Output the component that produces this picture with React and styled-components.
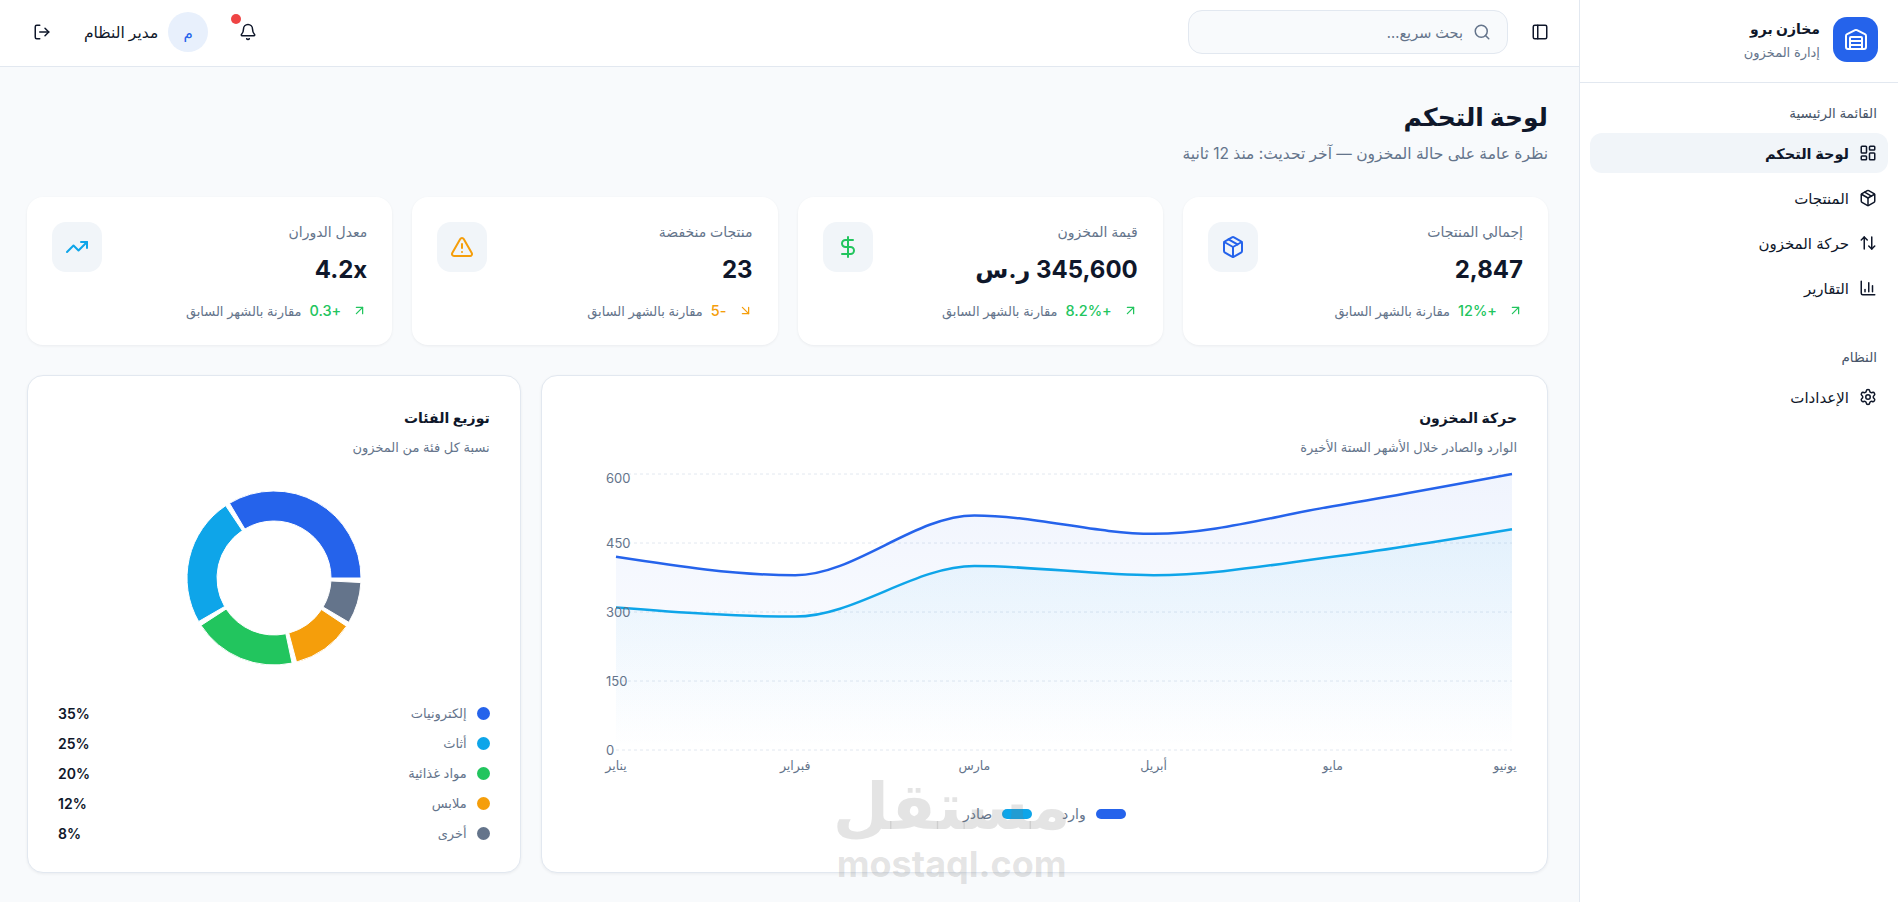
import React from 'react';
import styled, { createGlobalStyle } from 'styled-components';
import {
  Warehouse,
  LayoutDashboard,
  Package,
  ArrowUpDown,
  ChartColumn,
  Settings,
  PanelLeft,
  Search,
  Bell,
  LogOut,
  DollarSign,
  TriangleAlert,
  TrendingUp,
  ArrowUpRight,
  ArrowDownRight,
} from 'lucide-react';

const GlobalStyle = createGlobalStyle`
  * { box-sizing: border-box; }
  html, body { margin: 0; height: 100%; }
  body {
    background: #f8fafc;
    color: #0f172a;
    font-family: Inter, "Noto Sans", "DejaVu Sans", sans-serif;
    overflow: hidden;
  }
`;

const Shell = styled.div`
  display: flex;
  width: 1902px;
  height: 902px;
`;

const Sidebar = styled.aside`
  width: 323px;
  flex-shrink: 0;
  background: #fff;
  border-left: 1px solid #e2e8f0;
`;

const Brand = styled.div`
  height: 83px;
  margin-right: 4px;
  padding: 17px 20px 0 0;
  display: flex;
  gap: 13px;
  border-bottom: 1px solid #e2e8f0;
`;

const BrandLogo = styled.div`
  width: 45px;
  height: 45px;
  border-radius: 14px;
  background: #2563eb;
  color: #fff;
  display: flex;
  align-items: center;
  justify-content: center;
`;

const BrandName = styled.div`
  font-size: 14px;
  font-weight: 700;
  line-height: 24px;
`;

const BrandSub = styled.div`
  font-size: 13px;
  line-height: 22px;
  color: #64748b;
`;

const Nav = styled.nav`
  padding: 20px 14px 0 10px;
`;

const NavLabel = styled.div`
  font-size: 13.5px;
  line-height: 20px;
  color: #475569;
  font-weight: 500;
  padding: 0 11px;
  margin-bottom: 10px;
  margin-top: ${(p) => (p.$spaced ? '39px' : '0')};
`;

const NavItem = styled.div`
  height: 40px;
  margin-bottom: 5px;
  padding: 0 11px;
  border-radius: 12px;
  display: flex;
  align-items: center;
  gap: 10px;
  font-size: ${(p) => (p.$active ? '14.5px' : '15px')};
  font-weight: ${(p) => (p.$active ? 600 : 400)};
  background: ${(p) => (p.$active ? '#f1f5f9' : 'transparent')};
`;

const Main = styled.div`
  flex: 1;
  min-width: 0;
  display: flex;
  flex-direction: column;
`;

const Topbar = styled.header`
  height: 67px;
  flex-shrink: 0;
  background: #fff;
  border-bottom: 1px solid #e2e8f0;
  display: flex;
  align-items: center;
  padding: 0 27px 2px 30px;
`;

const IconButton = styled.div`
  position: relative;
  width: 24px;
  height: 24px;
  display: flex;
  align-items: center;
  justify-content: center;
`;

const SearchBox = styled.div`
  width: 320px;
  height: 44px;
  margin-right: 20px;
  padding: 0 16px;
  display: flex;
  align-items: center;
  gap: 10px;
  border: 1px solid #e2e8f0;
  border-radius: 14px;
  background: #f8fafc;
  font-size: 14.5px;
  color: #64748b;
`;

const TopbarEnd = styled.div`
  margin-right: auto;
  display: flex;
  align-items: center;
`;

const NotifyDot = styled.span`
  position: absolute;
  top: -6px;
  right: 19px;
  width: 10px;
  height: 10px;
  border-radius: 50%;
  background: #ef4444;
`;

const Avatar = styled.div`
  width: 40px;
  height: 40px;
  margin: 0 28px 0 10px;
  border-radius: 50%;
  background: #e8f0fc;
  color: #2563eb;
  font-size: 15px;
  display: flex;
  align-items: center;
  justify-content: center;
`;

const UserName = styled.div`
  font-size: 15.5px;
  font-weight: 500;
  margin-left: 30px;
`;

const Content = styled.main`
  flex: 1;
  padding: 31px 31px 0 27px;
`;

const PageTitle = styled.h1`
  margin: 0;
  font-size: 25px;
  line-height: 38px;
  font-weight: 700;
`;

const PageSub = styled.p`
  margin: 6px 0 0;
  font-size: 15.5px;
  line-height: 24px;
  color: #64748b;
`;

const StatGrid = styled.div`
  display: grid;
  grid-template-columns: repeat(4, 1fr);
  gap: 20px;
  margin-top: 31px;
`;

const StatCard = styled.div`
  height: 148px;
  padding: 25px;
  border-radius: 16px;
  background: #fff;
  box-shadow: 0 1px 3px rgba(15, 23, 42, 0.06);
`;

const StatTop = styled.div`
  display: flex;
  justify-content: space-between;
`;

const StatLabel = styled.div`
  font-size: 14px;
  line-height: 20px;
  font-weight: 500;
  color: #64748b;
`;

const StatValue = styled.div`
  margin-top: 12px;
  font-size: 24px;
  line-height: 32px;
  font-weight: 700;
`;

const StatIcon = styled.div`
  width: 50px;
  height: 50px;
  border-radius: 14px;
  background: #f1f5f9;
  color: ${(p) => p.$color};
  display: flex;
  align-items: center;
  justify-content: center;
`;

const StatFoot = styled.div`
  margin-top: 16px;
  display: flex;
  align-items: center;
  gap: 8px;
  font-size: 13px;
  color: #64748b;
`;

const Delta = styled.span`
  color: ${(p) => p.$color};
  font-size: 14.5px;
  font-weight: 500;
  margin-right: 3px;
`;

const ChartGrid = styled.div`
  display: grid;
  grid-template-columns: repeat(3, 1fr);
  gap: 20px;
  margin-top: 30px;
`;

const Panel = styled.section`
  position: relative;
  grid-column: span ${(p) => p.$span || 1};
  height: 498px;
  padding: 30px;
  border: 1px solid #e2e8f0;
  border-radius: 16px;
  background: #fff;
  box-shadow: 0 1px 3px rgba(15, 23, 42, 0.06);
`;

const PanelTitle = styled.h2`
  margin: 0;
  font-size: 14px;
  line-height: 24px;
  font-weight: 600;
`;

const PanelSub = styled.p`
  margin: 7px 0 0;
  font-size: 13px;
  line-height: 20px;
  color: #64748b;
`;

const ChartSvg = styled.svg`
  display: block;
  direction: ltr;
  font-family: inherit;
  margin-top: 3px;
`;

const ChartLegend = styled.div`
  display: flex;
  justify-content: center;
  gap: 30px;
  margin-top: 15px;
  font-size: 14px;
  color: #64748b;
`;

const LegendItem = styled.div`
  display: flex;
  align-items: center;
  gap: 10px;
`;

const LegendKey = styled.span`
  width: 30px;
  height: 10px;
  border-radius: 5px;
  background: ${(p) => p.$color};
`;

const DonutWrap = styled.div`
  display: flex;
  justify-content: center;
  margin-top: 31px;
`;

const CategoryList = styled.div`
  margin-top: 30px;
`;

const CategoryRow = styled.div`
  height: 30px;
  display: flex;
  align-items: center;
  gap: 10px;
  font-size: 13px;
  color: #64748b;
`;

const CategoryDot = styled.span`
  width: 13px;
  height: 13px;
  border-radius: 50%;
  background: ${(p) => p.$color};
`;

const CategoryValue = styled.span`
  margin-right: auto;
  width: 32px;
  direction: ltr;
  text-align: left;
  font-weight: 600;
  font-size: 14px;
  color: #0f172a;
`;

const Watermark = styled.div`
  position: absolute;
  left: 290px;
  top: 394px;
  width: 240px;
  text-align: center;
  color: rgba(120, 120, 120, 0.2);
  font-weight: 700;
  line-height: 1;
  pointer-events: none;
`;

const WatermarkAr = styled.div`
  font-size: 65px;
  line-height: 72px;
`;

const WatermarkEn = styled.div`
  font-size: 36px;
  margin-top: 4px;
  direction: ltr;
`;

const stats = [
  { label: 'إجمالي المنتجات', value: '2,847', delta: '+12%', icon: Package, color: '#2563eb', up: true },
  { label: 'قيمة المخزون', value: '345,600 ر.س', delta: '+8.2%', icon: DollarSign, color: '#22c55e', up: true },
  { label: 'منتجات منخفضة', value: '23', delta: '-5', icon: TriangleAlert, color: '#f59e0b', up: false },
  { label: 'معدل الدوران', value: '4.2x', delta: '+0.3', icon: TrendingUp, color: '#0ea5e9', up: true },
];

const categories = [
  { name: 'إلكترونيات', pct: 35, color: '#2563eb' },
  { name: 'أثاث', pct: 25, color: '#0ea5e9' },
  { name: 'مواد غذائية', pct: 20, color: '#22c55e' },
  { name: 'ملابس', pct: 12, color: '#f59e0b' },
  { name: 'أخرى', pct: 8, color: '#64748b' },
];

const months = ['يناير', 'فبراير', 'مارس', 'أبريل', 'مايو', 'يونيو'];
const inbound = [420, 380, 510, 470, 530, 600];
const outbound = [310, 290, 400, 380, 420, 480];

const W = 943;
const H = 330;
const X0 = 42;
const STEP = 179.2;
const BASE = 290;
const SCALE = 0.46;

// same maths as d3 curveMonotoneX, so the curves bend like the chart lib's
function monotonePath(values) {
  const pts = values.map((v, i) => [X0 + i * STEP, BASE - v * SCALE]);
  const slopes = pts.slice(1).map((p, i) => (p[1] - pts[i][1]) / STEP);
  const sign = (v) => (v < 0 ? -1 : 1);
  const t = pts.map((_, i) => {
    if (i === 0 || i === pts.length - 1) return null;
    const a = slopes[i - 1];
    const b = slopes[i];
    return (sign(a) + sign(b)) * Math.min(Math.abs(a), Math.abs(b), 0.25 * Math.abs(a + b)) || 0;
  });
  t[0] = (3 * slopes[0] - t[1]) / 2;
  t[t.length - 1] = (3 * slopes[slopes.length - 1] - t[t.length - 2]) / 2;
  let d = `M${pts[0][0]},${pts[0][1]}`;
  for (let i = 1; i < pts.length; i++) {
    const h = STEP / 3;
    d += `C${pts[i - 1][0] + h},${pts[i - 1][1] + h * t[i - 1]},${pts[i][0] - h},${pts[i][1] - h * t[i]},${pts[i][0]},${pts[i][1]}`;
  }
  return d;
}

function MovementChart() {
  const close = `L${X0 + 5 * STEP},${BASE}L${X0},${BASE}Z`;
  const blue = monotonePath(inbound);
  const cyan = monotonePath(outbound);
  return (
    <ChartSvg width={W} height={H} viewBox={`0 0 ${W} ${H}`}>
      <defs>
        <linearGradient id="fillBlue" x1="0" y1="0" x2="0" y2="1">
          <stop offset="0%" stopColor="#2563eb" stopOpacity="0.07" />
          <stop offset="100%" stopColor="#2563eb" stopOpacity="0" />
        </linearGradient>
        <linearGradient id="fillCyan" x1="0" y1="0" x2="0" y2="1">
          <stop offset="0%" stopColor="#0ea5e9" stopOpacity="0.07" />
          <stop offset="100%" stopColor="#0ea5e9" stopOpacity="0" />
        </linearGradient>
      </defs>
      {[0, 150, 300, 450, 600].map((v) => (
        <line key={v} x1={X0} x2={X0 + 5 * STEP} y1={BASE - v * SCALE} y2={BASE - v * SCALE} stroke="#e2e8f0" strokeDasharray="3 3" />
      ))}
      <path d={blue + close} fill="url(#fillBlue)" />
      <path d={cyan + close} fill="url(#fillCyan)" />
      <path d={blue} fill="none" stroke="#2563eb" strokeWidth="2.5" />
      <path d={cyan} fill="none" stroke="#0ea5e9" strokeWidth="2.5" />
      {[0, 150, 300, 450, 600].map((v) => (
        <text key={v} x={32} y={BASE - v * SCALE + (v === 600 ? 9 : 5)} fontSize="13" fill="#64748b">{v}</text>
      ))}
      {months.map((m, i) => (
        <text key={m} x={i === 5 ? X0 + 5 * STEP - 7 : X0 + i * STEP} y={BASE + 20} fontSize="12.5" fill="#64748b" textAnchor="middle">{m}</text>
      ))}
    </ChartSvg>
  );
}

function arcPath(cx, cy, r0, r1, from, to) {
  const rad = (a) => (a * Math.PI) / 180;
  const pt = (r, a) => `${cx + r * Math.cos(rad(a))},${cy - r * Math.sin(rad(a))}`;
  const large = to - from > 180 ? 1 : 0;
  return `M${pt(r1, from)}A${r1},${r1} 0 ${large} 0 ${pt(r1, to)}L${pt(r0, to)}A${r0},${r0} 0 ${large} 1 ${pt(r0, from)}Z`;
}

function Donut() {
  let angle = 0;
  return (
    <svg width="180" height="180" viewBox="0 0 180 180">
      {categories.map((c) => {
        const sweep = (345 * c.pct) / 100;
        const d = arcPath(90, 90, 57, 87, angle, angle + sweep);
        angle += sweep + 3;
        return <path key={c.name} d={d} fill={c.color} stroke="#fff" strokeWidth="1" />;
      })}
    </svg>
  );
}

export default function App() {
  return (
    <>
      <GlobalStyle />
      <Shell dir="rtl">
        <Sidebar>
          <Brand>
            <BrandLogo><Warehouse size={24} strokeWidth={2} /></BrandLogo>
            <div>
              <BrandName>مخازن برو</BrandName>
              <BrandSub>إدارة المخزون</BrandSub>
            </div>
          </Brand>
          <Nav>
            <NavLabel>القائمة الرئيسية</NavLabel>
            <NavItem $active><LayoutDashboard size={18} />لوحة التحكم</NavItem>
            <NavItem><Package size={18} />المنتجات</NavItem>
            <NavItem><ArrowUpDown size={18} />حركة المخزون</NavItem>
            <NavItem><ChartColumn size={18} />التقارير</NavItem>
            <NavLabel $spaced>النظام</NavLabel>
            <NavItem><Settings size={18} />الإعدادات</NavItem>
          </Nav>
        </Sidebar>
        <Main>
          <Topbar>
            <IconButton><PanelLeft size={18} /></IconButton>
            <SearchBox><Search size={18} />بحث سريع...</SearchBox>
            <TopbarEnd>
              <IconButton><Bell size={18} /><NotifyDot /></IconButton>
              <Avatar>م</Avatar>
              <UserName>مدير النظام</UserName>
              <IconButton><LogOut size={18} /></IconButton>
            </TopbarEnd>
          </Topbar>
          <Content>
            <PageTitle>لوحة التحكم</PageTitle>
            <PageSub>نظرة عامة على حالة المخزون — آخر تحديث: منذ 12 ثانية</PageSub>
            <StatGrid>
              {stats.map((s) => {
                const Icon = s.icon;
                const Arrow = s.up ? ArrowUpRight : ArrowDownRight;
                const tone = s.up ? '#22c55e' : '#f59e0b';
                return (
                  <StatCard key={s.label}>
                    <StatTop>
                      <div>
                        <StatLabel>{s.label}</StatLabel>
                        <StatValue>{s.value}</StatValue>
                      </div>
                      <StatIcon $color={s.color}><Icon size={24} /></StatIcon>
                    </StatTop>
                    <StatFoot>
                      <Arrow size={15} color={tone} />
                      <Delta $color={tone}>{s.delta}</Delta>
                      مقارنة بالشهر السابق
                    </StatFoot>
                  </StatCard>
                );
              })}
            </StatGrid>
            <ChartGrid>
              <Panel $span={2}>
                <PanelTitle>حركة المخزون</PanelTitle>
                <PanelSub>الوارد والصادر خلال الأشهر الستة الأخيرة</PanelSub>
                <MovementChart />
                <ChartLegend>
                  <LegendItem><LegendKey $color="#2563eb" />وارد</LegendItem>
                  <LegendItem><LegendKey $color="#0ea5e9" />صادر</LegendItem>
                </ChartLegend>
                <Watermark>
                  <WatermarkAr>مستقل</WatermarkAr>
                  <WatermarkEn>mostaql.com</WatermarkEn>
                </Watermark>
              </Panel>
              <Panel>
                <PanelTitle>توزيع الفئات</PanelTitle>
                <PanelSub>نسبة كل فئة من المخزون</PanelSub>
                <DonutWrap><Donut /></DonutWrap>
                <CategoryList>
                  {categories.map((c) => (
                    <CategoryRow key={c.name}>
                      <CategoryDot $color={c.color} />
                      {c.name}
                      <CategoryValue>{c.pct}%</CategoryValue>
                    </CategoryRow>
                  ))}
                </CategoryList>
              </Panel>
            </ChartGrid>
          </Content>
        </Main>
      </Shell>
    </>
  );
}
